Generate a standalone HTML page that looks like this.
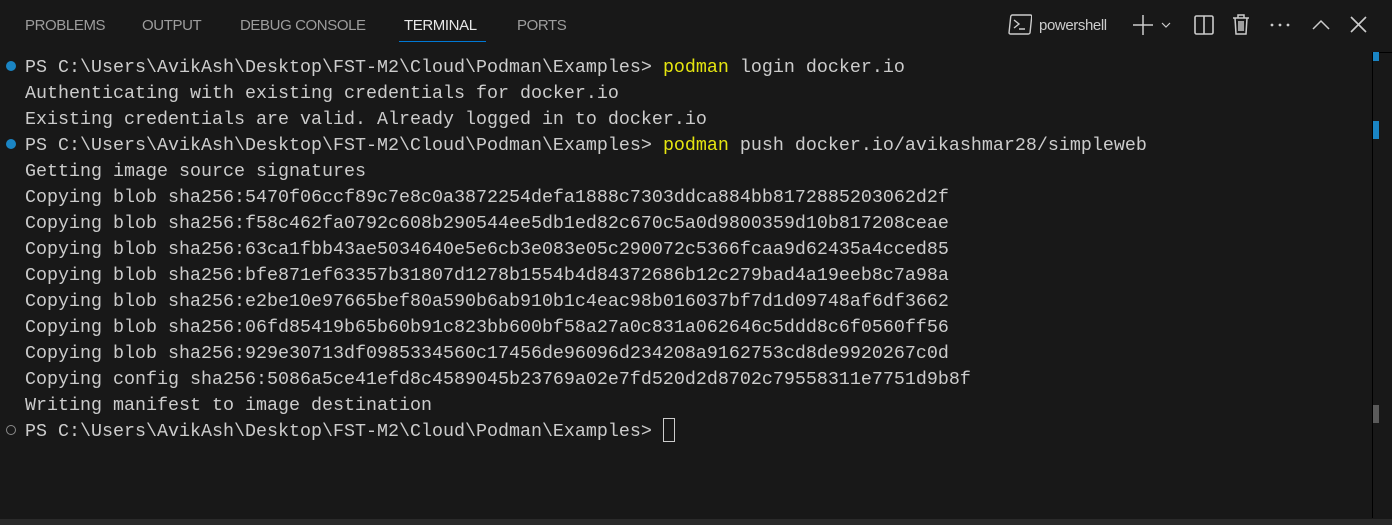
<!DOCTYPE html>
<html><head><meta charset="utf-8"><style>
html,body{margin:0;padding:0;background:#181818;width:1392px;height:525px;overflow:hidden;position:relative;font-family:"Liberation Sans",sans-serif}
.tab{position:absolute;top:17px;font-size:15px;color:#9d9d9d;letter-spacing:-0.4px}
.term{position:absolute;left:25px;top:55px;font-family:"Liberation Mono",monospace;font-size:18.33px;line-height:26px;color:#cccccc;white-space:pre}
.y{color:#e5e510}
.ic{position:absolute;color:#cccccc}
</style></head><body>
<div class="tab" style="left:25px">PROBLEMS</div>
<div class="tab" style="left:142px">OUTPUT</div>
<div class="tab" style="left:240px">DEBUG CONSOLE</div>
<div class="tab" style="left:404px;color:#e7e7e7">TERMINAL</div>
<div style="position:absolute;left:399px;top:41px;width:87px;height:1px;background:#0078d4"></div>
<div class="tab" style="left:517px">PORTS</div>

<svg class="ic" style="left:1008px;top:14px" width="24" height="22" viewBox="0 0 24 22"><rect x="1" y="1" width="21" height="19" rx="1.5" fill="none" stroke="#ccc" stroke-width="1.4" transform="skewX(-6) translate(2,0)"/><path d="M6 6l5 4-5 4M11 15h6" fill="none" stroke="#ccc" stroke-width="1.4"/></svg>
<div class="tab" style="left:1039px;color:#cccccc">powershell</div>
<svg class="ic" style="left:1132px;top:14px" width="44" height="22"><path d="M11 1v20M1 11h20" stroke="#ccc" stroke-width="1.5"/><path d="M30 9l4 4 4-4" fill="none" stroke="#ccc" stroke-width="1.2"/></svg>
<svg class="ic" style="left:1192px;top:14px" width="24" height="22"><rect x="3" y="2" width="18" height="18" rx="1.5" fill="none" stroke="#ccc" stroke-width="1.6"/><path d="M12 2v18" stroke="#ccc" stroke-width="1.6"/></svg>
<svg class="ic" style="left:1230px;top:13px" width="22" height="24"><path d="M3 5h16M8 5V2h6v3M5 5l1 16h10l1-16M9 8v10M11 8v10M13 8v10" fill="none" stroke="#ccc" stroke-width="1.5"/></svg>
<svg class="ic" style="left:1268px;top:14px" width="26" height="22"><circle cx="4" cy="11" r="1.4" fill="#ccc"/><circle cx="12" cy="11" r="1.4" fill="#ccc"/><circle cx="20" cy="11" r="1.4" fill="#ccc"/></svg>
<svg class="ic" style="left:1310px;top:14px" width="22" height="22"><path d="M3 15l8-8 8 8" fill="none" stroke="#ccc" stroke-width="1.5"/></svg>
<svg class="ic" style="left:1348px;top:14px" width="22" height="22"><path d="M3 3l15 15M18 3L3 18" stroke="#ccc" stroke-width="1.6"/></svg>

<div style="position:absolute;left:1372px;top:52px;width:1px;height:466px;background:#000"></div>
<div style="position:absolute;left:1372px;top:52px;width:20px;height:1px;background:#000"></div>
<div style="position:absolute;left:1373px;top:52px;width:6px;height:9px;background:#1a85c4"></div>
<div style="position:absolute;left:1373px;top:121px;width:6px;height:18px;background:#1a85c4"></div>
<div style="position:absolute;left:1373px;top:405px;width:6px;height:18px;background:#5a5a5a"></div>
<div style="position:absolute;left:0;top:519px;width:1392px;height:6px;background:#2a2a2a"></div>

<div style="position:absolute;left:6px;top:61px;width:10px;height:10px;border-radius:50%;background:#1a85c4"></div>
<div style="position:absolute;left:6px;top:139px;width:10px;height:10px;border-radius:50%;background:#1a85c4"></div>
<div style="position:absolute;left:6px;top:425px;width:8px;height:8px;border-radius:50%;border:1px solid #8a8a8a"></div>

<div class="term">PS C:\Users\AvikAsh\Desktop\FST-M2\Cloud\Podman\Examples> <span class="y">podman</span> login docker.io
Authenticating with existing credentials for docker.io
Existing credentials are valid. Already logged in to docker.io
PS C:\Users\AvikAsh\Desktop\FST-M2\Cloud\Podman\Examples> <span class="y">podman</span> push docker.io/avikashmar28/simpleweb
Getting image source signatures
Copying blob sha256:5470f06ccf89c7e8c0a3872254defa1888c7303ddca884bb8172885203062d2f
Copying blob sha256:f58c462fa0792c608b290544ee5db1ed82c670c5a0d9800359d10b817208ceae
Copying blob sha256:63ca1fbb43ae5034640e5e6cb3e083e05c290072c5366fcaa9d62435a4cced85
Copying blob sha256:bfe871ef63357b31807d1278b1554b4d84372686b12c279bad4a19eeb8c7a98a
Copying blob sha256:e2be10e97665bef80a590b6ab910b1c4eac98b016037bf7d1d09748af6df3662
Copying blob sha256:06fd85419b65b60b91c823bb600bf58a27a0c831a062646c5ddd8c6f0560ff56
Copying blob sha256:929e30713df0985334560c17456de96096d234208a9162753cd8de9920267c0d
Copying config sha256:5086a5ce41efd8c4589045b23769a02e7fd520d2d8702c79558311e7751d9b8f
Writing manifest to image destination
PS C:\Users\AvikAsh\Desktop\FST-M2\Cloud\Podman\Examples> </div>
<div style="position:absolute;left:663px;top:418px;width:10px;height:22px;border:1px solid #ccc"></div>
</body></html>
